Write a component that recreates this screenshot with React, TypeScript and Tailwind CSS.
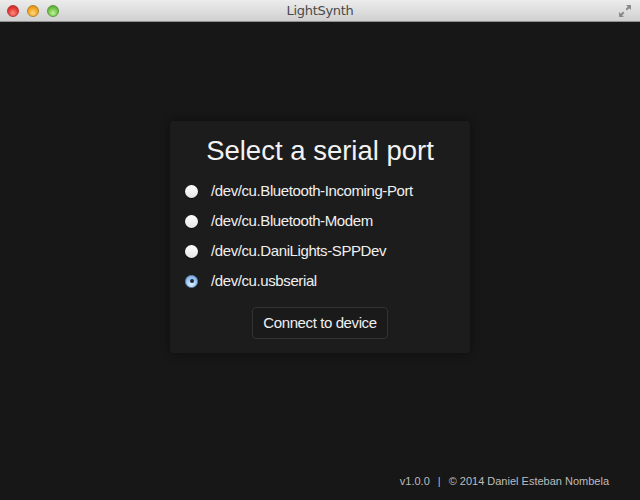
import React, { useState } from 'react';

const PORTS = [
  '/dev/cu.Bluetooth-Incoming-Port',
  '/dev/cu.Bluetooth-Modem',
  '/dev/cu.DaniLights-SPPDev',
  '/dev/cu.usbserial',
];

// macOS window buttons
function TrafficLights() {
  return (
    <div className="flex items-center gap-[8px] pl-[7px]">
      <span className="w-[12px] h-[12px] rounded-full border border-[#b33a3a] bg-[radial-gradient(circle_at_50%_70%,#ff8a80,#e0352f_60%,#b22420)]" />
      <span className="w-[12px] h-[12px] rounded-full border border-[#b5852a] bg-[radial-gradient(circle_at_50%_70%,#ffd77a,#f0a21f_60%,#c57e12)]" />
      <span className="w-[12px] h-[12px] rounded-full border border-[#5b9a3b] bg-[radial-gradient(circle_at_50%_70%,#c2f29a,#6cc043_60%,#459a2a)]" />
    </div>
  );
}

function FullscreenIcon() {
  return (
    <svg width="14" height="14" viewBox="0 0 14 14" className="mr-[8px]">
      <path d="M8 1h5v5l-1.8-1.8L9 6.4 7.6 5l2.2-2.2z" fill="#8a8a8a" />
      <path d="M6 13H1V8l1.8 1.8L5 7.6 6.4 9l-2.2 2.2z" fill="#8a8a8a" />
    </svg>
  );
}

function Radio({ checked }: { checked: boolean }) {
  if (checked) {
    return (
      <span className="w-[13px] h-[13px] rounded-full flex items-center justify-center border border-[#6f93c0] bg-[radial-gradient(circle_at_50%_75%,#dcefff,#9cc6f2_55%,#6fa2de)]">
        <span className="w-[4px] h-[4px] rounded-full bg-[#1d2a3a]" />
      </span>
    );
  }
  return (
    <span className="w-[13px] h-[13px] rounded-full bg-[linear-gradient(#ffffff,#e6e6e6)] shadow-[0_1px_1px_rgba(0,0,0,0.5)]" />
  );
}

export default function App() {
  const [selected, setSelected] = useState(3);

  return (
    <div className="w-[640px] h-[500px] flex flex-col bg-[#171717] font-['Liberation_Sans',Arial,sans-serif] overflow-hidden">
      {/* title bar */}
      <div className="h-[22px] flex items-center justify-between bg-[linear-gradient(#ececec,#d0d0d0)] border-b border-[#8f8f8f] relative">
        <TrafficLights />
        <span className="absolute left-0 right-0 text-center text-[13px] text-[#4a4a4a] font-['DejaVu_Sans',sans-serif] tracking-[-0.3px] pointer-events-none">
          LightSynth
        </span>
        <FullscreenIcon />
      </div>

      {/* content */}
      <div className="flex-1 flex flex-col items-center pt-[99px]">
        <div className="w-[300px] bg-[#1c1c1c] rounded-[4px] shadow-[0_0_10px_rgba(0,0,0,0.45)] pt-[10px] pb-[14px] px-[15px] flex flex-col">
          <h1 className="text-[27.5px] leading-[40px] text-center text-[#f2f2f2]">Select a serial port</h1>
          <div className="mt-[5px] flex flex-col">
            {PORTS.map((p, i) => (
              <label key={p} className="h-[30px] flex items-center gap-[13px] cursor-pointer" onClick={() => setSelected(i)}>
                <Radio checked={selected === i} />
                <span className="text-[15px] text-[#f0f0f0] tracking-[-0.4px]">{p}</span>
              </label>
            ))}
          </div>
          <div className="mt-[11px] flex justify-center">
            <button className="h-[32px] w-[136px] rounded-[4px] border border-[#333333] bg-[#1a1a1a] text-[15px] text-[#f0f0f0] tracking-[-0.4px]">
              Connect to device
            </button>
          </div>
        </div>

        {/* footer */}
        <div className="mt-auto self-stretch flex justify-end pr-[31px] pb-[11px] text-[11px] text-[#bdbdbd]">
          <span>v1.0.0</span>
          <span className="mx-[8px]">|</span>
          <span>© 2014 Daniel Esteban Nombela</span>
        </div>
      </div>
    </div>
  );
}
